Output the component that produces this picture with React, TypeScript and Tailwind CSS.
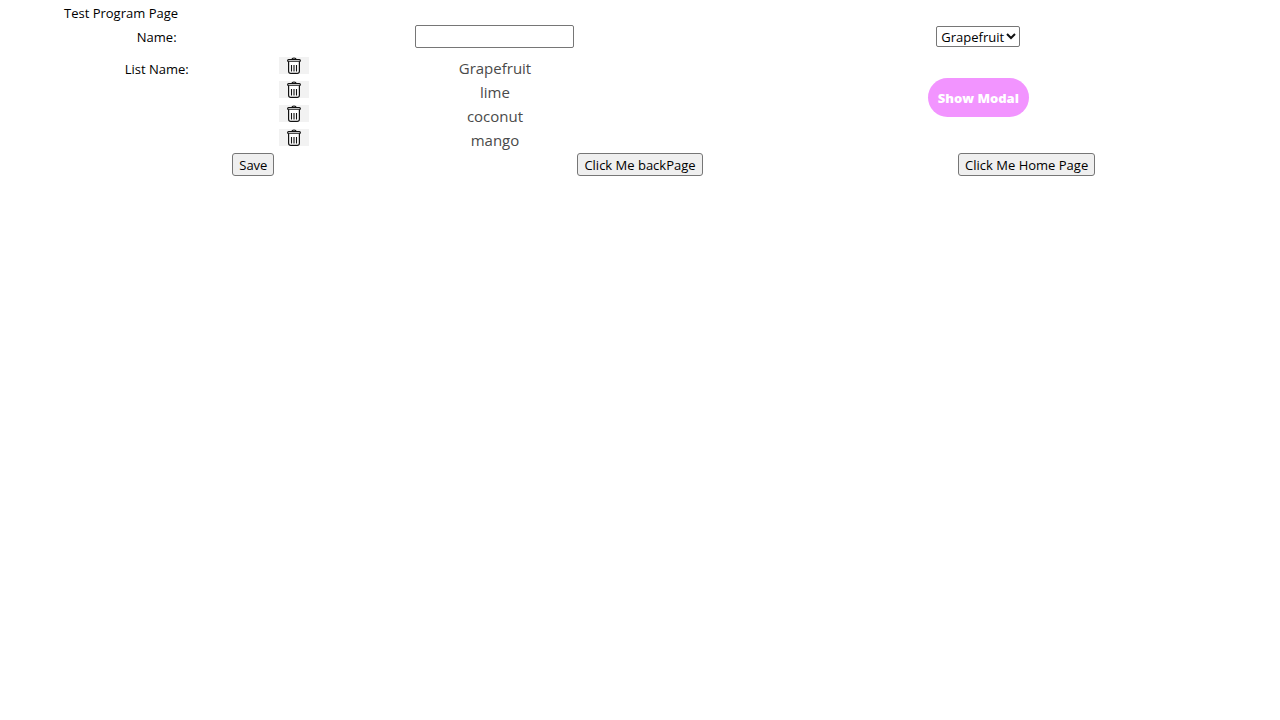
import { useState } from "react";

const fruits = ["Grapefruit", "lime", "coconut", "mango"];

const plainButton =
  "h-[23px] rounded-[3px] border border-[#767676] bg-[#efefef] px-1.5 text-[13px] leading-5 text-black";

function TrashIcon() {
  return (
    <svg width="14" height="17" viewBox="0 0 14 17" fill="none" stroke="#111" aria-hidden="true">
      <path d="M5 2.5V2Q5 1 7 1T9 2V2.5" strokeWidth="1.1" />
      <rect x=".6" y="2.6" width="12.8" height="2" rx="1" strokeWidth="1.1" fill="#fff" />
      <path d="M1.6 4.8V14.2Q1.7 16.4 3.8 16.4H10.2Q12.3 16.4 12.4 14.2V4.8" strokeWidth="1.2" fill="#fff" />
      <path d="M4.5 8V14.5M7 8V14.5M9.5 8V14.5" strokeWidth="1.1" />
    </svg>
  );
}

export default function App() {
  const [items, setItems] = useState(fruits);
  const [name, setName] = useState("");

  return (
    <main className="mx-[5%] font-['Open_Sans','Noto_Sans',sans-serif] text-[13px] leading-6 text-black">
      <h1 className="pt-px">Test Program Page</h1>
      <div className="grid grid-cols-12 gap-x-2 gap-y-2 text-center">
        <label htmlFor="name" className="col-span-2">
          Name:
        </label>
        <div className="col-span-5 flex h-[23px] justify-center">
          <input
            id="name"
            value={name}
            onChange={(e) => setName(e.target.value)}
            className="w-[159px] rounded-[2px] border border-[#767676] bg-white px-0.5"
          />
        </div>
        <div className="col-span-5 flex h-[23px] items-center justify-center">
          <div className="relative flex">
            <select
              aria-label="Fruit"
              defaultValue="Grapefruit"
              className="h-[21px] w-[84px] appearance-none rounded-[2px] border border-[#767676] bg-white pl-1 text-[13px] leading-5"
            >
              {fruits.map((f) => (
                <option key={f}>{f}</option>
              ))}
            </select>
            <svg
              width="10"
              height="8"
              viewBox="0 0 10 8"
              fill="none"
              stroke="#111"
              strokeWidth="2"
              aria-hidden="true"
              className="pointer-events-none absolute top-1.5 right-1"
            >
              <path d="M1 2 5 6 9 2" />
            </svg>
          </div>
        </div>
        <p className="col-span-2">List Name:</p>
        <ul className="col-span-5">
          {items.map((f) => (
            <li key={f} className="grid h-6 grid-cols-12 gap-x-2">
              <div className="col-span-2 flex justify-center">
                <button
                  type="button"
                  aria-label={`Delete ${f}`}
                  onClick={() => setItems(items.filter((i) => i !== f))}
                  className="flex h-[17px] w-[30px] justify-center bg-[#f2f2f2]"
                >
                  <TrashIcon />
                </button>
              </div>
              <span className="col-span-8 text-[15px] leading-[22px] text-[#4a4a4a]">{f}</span>
            </li>
          ))}
        </ul>
        <div className="col-span-5 pt-[21px]">
          <button
            type="button"
            className="h-[39px] rounded-full bg-[#f294ff] px-2.5 text-[13px] font-extrabold text-white"
          >
            Show Modal
          </button>
        </div>
      </div>
      <div className="grid grid-cols-3 justify-items-center gap-2">
        <button type="button" className={plainButton}>Save</button>
        <button type="button" className={plainButton}>Click Me backPage</button>
        <button type="button" className={plainButton}>Click Me Home Page</button>
      </div>
    </main>
  );
}
